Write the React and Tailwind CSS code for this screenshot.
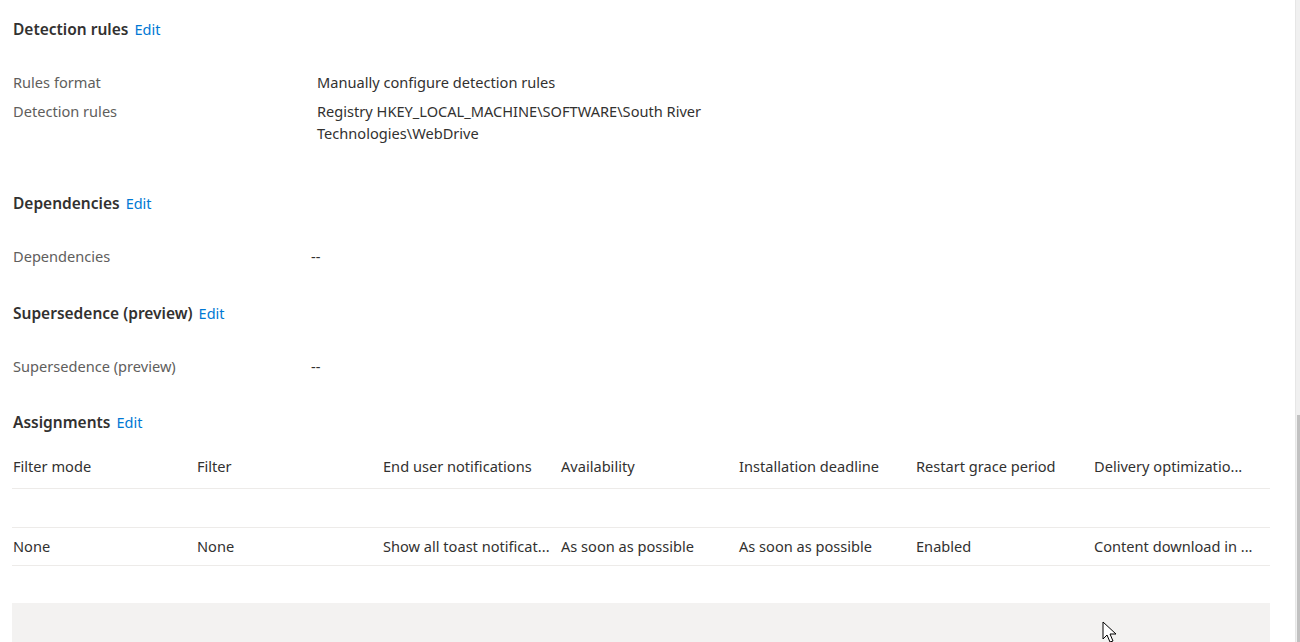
const font = { fontFamily: '"Noto Sans", "Open Sans", sans-serif' }

function SectionHeading({ title, className }) {
  return (
    <div className={`flex items-baseline gap-[6px] h-[22px] leading-[22px] ${className}`}>
      <span className="text-[15.5px] font-semibold text-[#323130]">{title}</span>
      <a className="text-[14.5px] text-[#0078d4] cursor-pointer">Edit</a>
    </div>
  )
}

function Field({ label, children, valueX, className = '' }) {
  return (
    <div className={`flex text-[14.6px] leading-[22px] ${className}`}>
      <div className={`shrink-0 text-[#605e5c] ${valueX}`}>{label}</div>
      <div className="text-[#323130] w-[400px]">{children}</div>
    </div>
  )
}

// cells are shown pre-truncated, as in the portal grid
const columns = [
  'Filter mode',
  'Filter',
  'End user notifications',
  'Availability',
  'Installation deadline',
  'Restart grace period',
  'Delivery optimizatio...',
]

const row = [
  'None',
  'None',
  'Show all toast notificat...',
  'As soon as possible',
  'As soon as possible',
  'Enabled',
  'Content download in ...',
]

function Cursor() {
  return (
    <svg className="absolute left-[1102px] top-[621px]" width="20" height="24" viewBox="0 0 20 24">
      <path d="M1 1 L1 18 L5 14 L8 21 L11 20 L8 13 L14 13 Z" fill="#fff" stroke="#000" strokeWidth="1" strokeLinejoin="round" />
    </svg>
  )
}

export default function App() {
  return (
    <div className="relative flex h-[642px] w-[1300px] overflow-hidden bg-white" style={font}>
      <div className="flex-1 pl-[13px] pr-[25px]">
        <SectionHeading title="Detection rules" className="mt-[18px]" />
        <Field label="Rules format" valueX="w-[304px]" className="mt-[31px]">
          Manually configure detection rules
        </Field>
        <Field label="Detection rules" valueX="w-[304px]" className="mt-[7px]">
          Registry HKEY_LOCAL_MACHINE\SOFTWARE\South River Technologies\WebDrive
        </Field>

        <SectionHeading title="Dependencies" className="mt-[48px]" />
        <Field label="Dependencies" valueX="w-[298px]" className="mt-[31px]">
          --
        </Field>

        <SectionHeading title="Supersedence (preview)" className="mt-[35px]" />
        <Field label="Supersedence (preview)" valueX="w-[298px]" className="mt-[31px]">
          --
        </Field>

        <SectionHeading title="Assignments" className="mt-[34px]" />

        <div className="mt-[13px] -ml-[1px] text-[14.6px]">
          <div className="grid grid-cols-[184px_186px_178px_178px_177px_178px_1fr] h-[43px] items-center border-b border-[#edebe9] text-[#323130]">
            {columns.map((c) => (
              <div key={c} className="whitespace-nowrap pl-[1px]">{c}</div>
            ))}
          </div>
          <div className="h-[39px] border-b border-[#edebe9]" />
          <div className="grid grid-cols-[184px_186px_178px_178px_177px_178px_1fr] h-[38px] items-center border-b border-[#edebe9] text-[#323130]">
            {row.map((c, i) => (
              <div key={i} className="whitespace-nowrap pl-[1px]">{c}</div>
            ))}
          </div>
        </div>

        <div className="mt-[37px] -ml-[1px] h-[60px] bg-[#f3f2f1]" />
      </div>

      <div className="w-[5px] flex flex-col border-l border-[#e6e6e6] bg-[#f0f0f0]">
        <div className="h-[415px]" />
        <div className="flex-1 bg-[#c1c1c1] ml-[1px]" />
      </div>

      <Cursor />
    </div>
  )
}
